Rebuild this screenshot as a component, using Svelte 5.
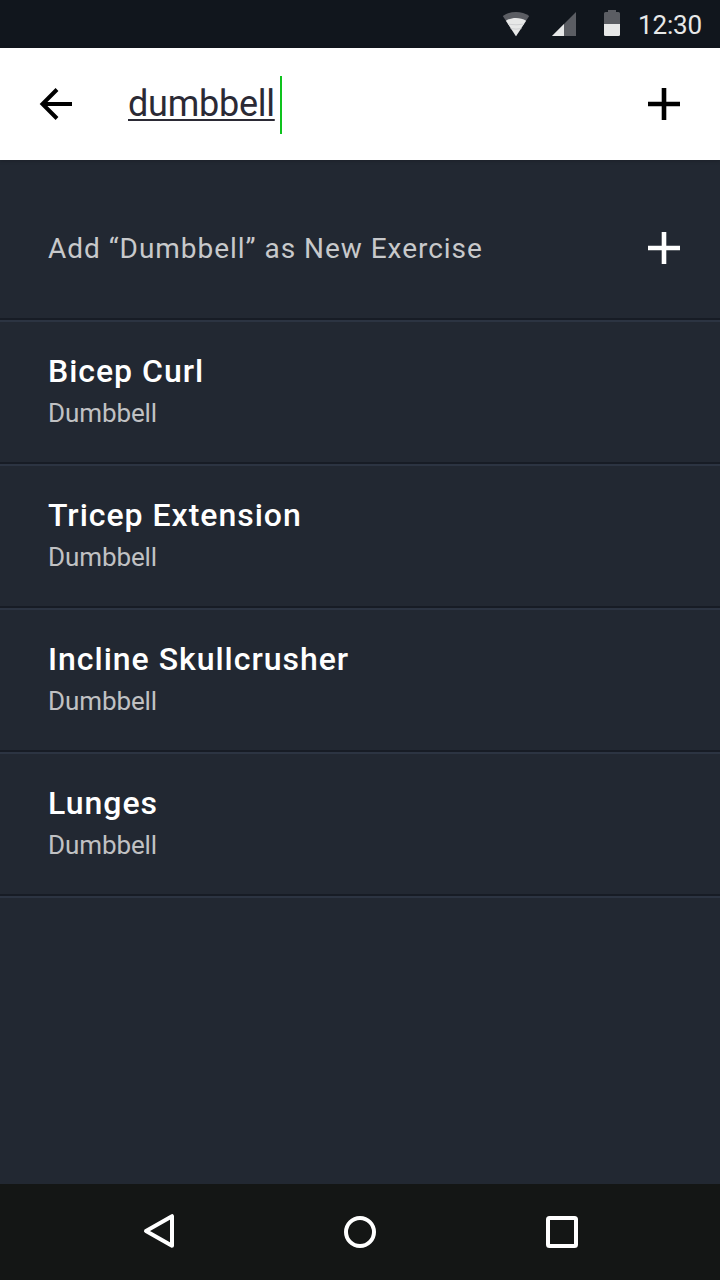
<script>
  const exercises = ['Bicep Curl', 'Tricep Extension', 'Incline Skullcrusher', 'Lunges'];
</script>

<div class="screen">
  <div class="status">
    <svg width="28" height="26" viewBox="0 0 28 26">
      <path d="M0.800 5C8-0.300 20-0.300 27.200 5L14 25.200Z" fill="#5b5d63" />
      <path d="M3.900 9.700C9.500 6.100 18.500 6.100 24.100 9.700L14 25.200Z" fill="#e7e8e8" />
      <path d="M6.200 13.200Q14 14.400 21.800 13.200M8.600 17.600Q14 18.600 19.400 17.600" fill="none" stroke="#cfd0d2" stroke-width="1" />
    </svg>
    <svg class="signal" width="24" height="24" viewBox="0 0 24 24">
      <path d="M24 0V24H0Z" fill="#5b5d63" />
      <path d="M12 12V24H0Z" fill="#e7e8e8" />
    </svg>
    <svg class="battery" width="16" height="26" viewBox="0 0 16 26">
      <path d="M4 0h8v2h2.500a1.500 1.500 0 0 1 1.500 1.500V14H0V3.500A1.500 1.500 0 0 1 1.500 2H4Z" fill="#5b5d63" />
      <path d="M0 14h16v10.500a1.500 1.500 0 0 1-1.500 1.500h-13A1.500 1.500 0 0 1 0 24.500Z" fill="#e7e8e8" />
    </svg>
    <span class="clock">12:30</span>
  </div>

  <header>
    <svg width="32" height="32" viewBox="0 0 32 32">
      <path d="M32 16H2.800M17 1.500L2.500 16L17 30.500" fill="none" stroke="#000" stroke-width="4" />
    </svg>
    <div class="field"><span class="query">dumbbell</span><span class="caret"></span></div>
    <svg width="32" height="32" viewBox="0 0 32 32">
      <path d="M16 0V32M0 16H32" stroke="#000" stroke-width="4.600" />
    </svg>
  </header>

  <main>
    <div class="add">
      <span>Add “Dumbbell” as New Exercise</span>
      <svg width="32" height="32" viewBox="0 0 32 32">
        <path d="M16 0V32M0 16H32" stroke="#fff" stroke-width="4.600" />
      </svg>
    </div>
    {#each exercises as name}
      <div class="item">
        <div class="name">{name}</div>
        <div class="kind">Dumbbell</div>
      </div>
    {/each}
  </main>

  <nav>
    <svg width="32" height="36" viewBox="0 0 32 36">
      <path d="M30 2.200V31.800L4 17Z" fill="none" stroke="#fff" stroke-width="4" stroke-linejoin="round" />
    </svg>
    <svg width="32" height="32" viewBox="0 0 32 32">
      <circle cx="16" cy="16" r="14" fill="none" stroke="#fff" stroke-width="4" />
    </svg>
    <svg width="32" height="32" viewBox="0 0 32 32">
      <rect x="2" y="2" width="28" height="28" rx="1.500" fill="none" stroke="#fff" stroke-width="4" />
    </svg>
  </nav>
</div>

<style>
  .screen {
    display: flex;
    flex-direction: column;
    width: 720px;
    height: 1280px;
    overflow: hidden;
    background: #222832;
    font-family: Roboto, sans-serif;
  }
  svg {
    display: block;
    flex: none;
    overflow: visible;
  }
  .status {
    display: flex;
    justify-content: flex-end;
    box-sizing: border-box;
    height: 48px;
    padding: 10px 17px 0 0;
    background: #11161d;
  }
  .status > svg:first-child {
    margin-top: 1px;
    margin-right: 22px;
  }
  .signal {
    margin-top: 2px;
    margin-right: 28px;
  }
  .battery {
    margin-right: 18px;
  }
  .clock {
    width: 65px;
    color: #e7e8e8;
    font-size: 26px;
    line-height: 30px;
    letter-spacing: -0.150px;
    white-space: nowrap;
  }
  header {
    display: flex;
    align-items: center;
    box-sizing: border-box;
    height: 112px;
    padding: 0 40px;
    background: #fff;
    box-shadow: 0 1px 4px rgba(0, 0, 0, 0.2);
  }
  .field {
    display: flex;
    flex: 1;
    align-items: center;
    margin-left: 56px;
  }
  .query {
    color: #2b2a35;
    font-size: 36px;
    line-height: 42px;
    letter-spacing: -0.250px;
    text-decoration: underline;
    text-decoration-thickness: 2px;
    text-underline-offset: 3px;
    text-decoration-skip-ink: none;
  }
  .caret {
    width: 2px;
    height: 58px;
    margin-top: 2px;
    margin-left: 5px;
    background: #0ec31d;
  }
  main {
    flex: 1;
  }
  .add,
  .item {
    box-sizing: border-box;
    border-bottom: 2px solid #171c25;
    box-shadow: 0 2px 0 #2c3442;
  }
  .add {
    display: flex;
    align-items: center;
    justify-content: space-between;
    height: 160px;
    padding: 18px 40px 0 48px;
    color: #c8c9cb;
    font-size: 28px;
    letter-spacing: 0.970px;
  }
  .item {
    height: 144px;
    padding: 32px 48px 0;
  }
  .name {
    color: #fff;
    font-size: 32px;
    font-weight: 500;
    line-height: 38px;
    letter-spacing: 0.980px;
  }
  .kind {
    margin-top: 7px;
    color: #c0c1c3;
    font-size: 26px;
    line-height: 32px;
    letter-spacing: -0.100px;
  }
  nav {
    display: grid;
    grid-template-columns: 32px 32px 32px;
    align-items: center;
    column-gap: 170px;
    height: 96px;
    padding-left: 142px;
    background: #141615;
  }
</style>
